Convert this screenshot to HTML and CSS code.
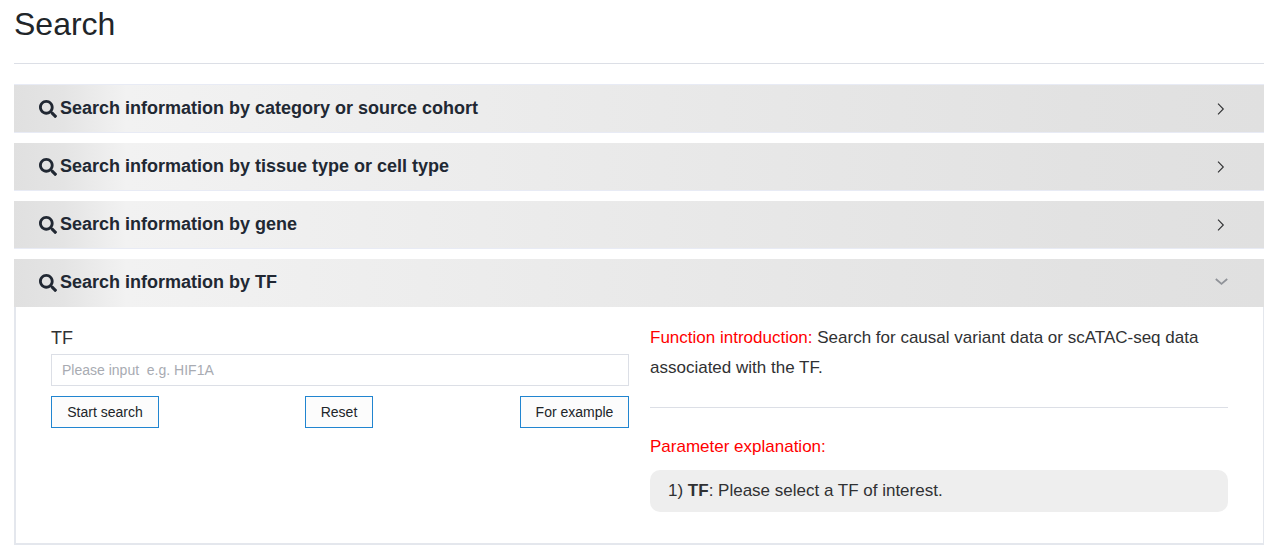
FILE: index.html
```html
<!DOCTYPE html>
<html lang="en">
<head>
<meta charset="utf-8">
<title>Search</title>
<link rel="stylesheet" href="styles.css">
</head>
<body>
<svg class="defs" width="0" height="0">
  <symbol id="lens" viewBox="0 0 512 512"><path fill="currentColor" d="M505 442.700L405.300 343c-4.500-4.500-10.600-7-17-7H372c27.600-35.300 44-79.700 44-128C416 93.100 322.900 0 208 0S0 93.100 0 208s93.100 208 208 208c48.300 0 92.700-16.400 128-44v16.300c0 6.400 2.500 12.500 7 17l99.700 99.700c9.400 9.400 24.600 9.400 33.900 0l28.300-28.300c9.400-9.400 9.400-24.600.1-34zM208 336c-70.700 0-128-57.200-128-128 0-70.700 57.200-128 128-128 70.700 0 128 57.200 128 128 0 70.700-57.200 128-128 128z"/></symbol>
  <symbol id="chevron" viewBox="0 0 14 14"><path fill="none" stroke="currentColor" stroke-width="1.1" d="M4 1.700L9.300 7 4 12.300"/></symbol>
</svg>
<main class="page">
  <h1 class="title">Search</h1>
  <div class="accordion">
    <div class="bar bar-first"><svg class="lens"><use href="#lens"/></svg><span class="label">Search information by category or source cohort</span><svg class="chevron"><use href="#chevron"/></svg></div>
    <div class="bar"><svg class="lens"><use href="#lens"/></svg><span class="label">Search information by tissue type or cell type</span><svg class="chevron"><use href="#chevron"/></svg></div>
    <div class="bar"><svg class="lens"><use href="#lens"/></svg><span class="label">Search information by gene</span><svg class="chevron"><use href="#chevron"/></svg></div>
    <section>
      <div class="bar bar-open"><svg class="lens"><use href="#lens"/></svg><span class="label">Search information by TF</span><svg class="chevron chevron-open" viewBox="0 0 14 14"><path fill="none" stroke="currentColor" stroke-width="1.8" d="M1.800 5l5.700 4.900L13.200 5"/></svg></div>
      <div class="panel">
        <form class="form">
          <label class="field-label" for="tf">TF</label>
          <input class="field" id="tf" type="text" placeholder="Please input&nbsp; e.g. HIF1A">
          <div class="actions">
            <button class="button" type="button">Start search</button>
            <button class="button button-reset" type="button">Reset</button>
            <button class="button button-example" type="button">For example</button>
          </div>
        </form>
        <div class="info">
          <p class="text"><span class="red">Function introduction:</span> Search for causal variant data or scATAC-seq data associated with the TF.</p>
          <hr class="rule">
          <p class="text red">Parameter explanation:</p>
          <p class="note">1) <b>TF</b>: Please select a TF of interest.</p>
        </div>
      </div>
    </section>
  </div>
</main>
</body>
</html>
```
FILE: styles.css
```css
* { box-sizing: border-box; }
body {
  margin: 0;
  background: #fff;
  color: #303133;
  font-family: "Liberation Sans", Arial, sans-serif;
  overflow: hidden;
}
.defs { display: block; }
.page { width: 1250px; margin-left: 14px; padding-top: 4px; }
.title {
  height: 60px;
  margin: 0 0 20px;
  border-bottom: 1px solid #dcdfe6;
  color: #212529;
  font-size: 32px;
  font-weight: 400;
  line-height: 40px;
}
.accordion { display: flex; flex-direction: column; gap: 10px; }
.bar {
  display: flex;
  align-items: flex-start;
  height: 48px;
  padding: 10px 36px 0 25px;
  border-bottom: 1px solid #e8ebf5;
  background: linear-gradient(90deg, #e0e0e0 0%, #e4e4e4 4%, #f2f2f2 9%, #e2e2e2 85%, #e0e0e0 100%);
  color: #212833;
}
.bar-first { height: 49px; border-top: 1px solid #e8ebf5; }
.bar-open { border-bottom: 0; }
.lens { width: 18px; height: 18px; margin: 5px 3px 0 0; }
.label { flex: 1; font-size: 18px; font-weight: 700; line-height: 26px; }
.chevron { width: 14px; height: 14px; margin-top: 7px; color: #303133; }
.chevron-open { margin-top: 5px; color: #909399; }
.panel {
  display: flex;
  gap: 21px;
  height: 238px;
  padding: 16px 35px 0;
  border: solid #e4e7ed;
  border-width: 0 1px 2px 2px;
}
.form { display: flex; flex-direction: column; width: 578px; }
.field-label { height: 31px; font-size: 18px; line-height: 30px; }
.field {
  width: 578px;
  height: 32px;
  padding: 0 10px;
  border: 1px solid #dcdfe6;
  background: #fff;
  font: 14px "Liberation Sans", Arial, sans-serif;
}
.field::placeholder { color: #a8abb2; opacity: 1; }
.actions { display: grid; grid-template-columns: 254px 215px 109px; margin-top: 10px; }
.button {
  width: 108px;
  height: 32px;
  padding: 0;
  border: 1px solid #2185d0;
  background: #fcfcfc;
  color: #212529;
  font: 14px "Liberation Sans", Arial, sans-serif;
}
.button-reset { width: 68px; }
.button-example { width: 109px; }
.info { width: 578px; }
.text { margin: 0; font-size: 17px; line-height: 30px; }
.red { color: #f00; }
.rule { margin: 24px 0; border: 0; border-top: 1px solid #dcdfe6; }
.note {
  height: 42px;
  margin: 8px 0 0;
  padding: 0 18px;
  border-radius: 10px;
  background: #eee;
  font-size: 17px;
  line-height: 41px;
}
```
